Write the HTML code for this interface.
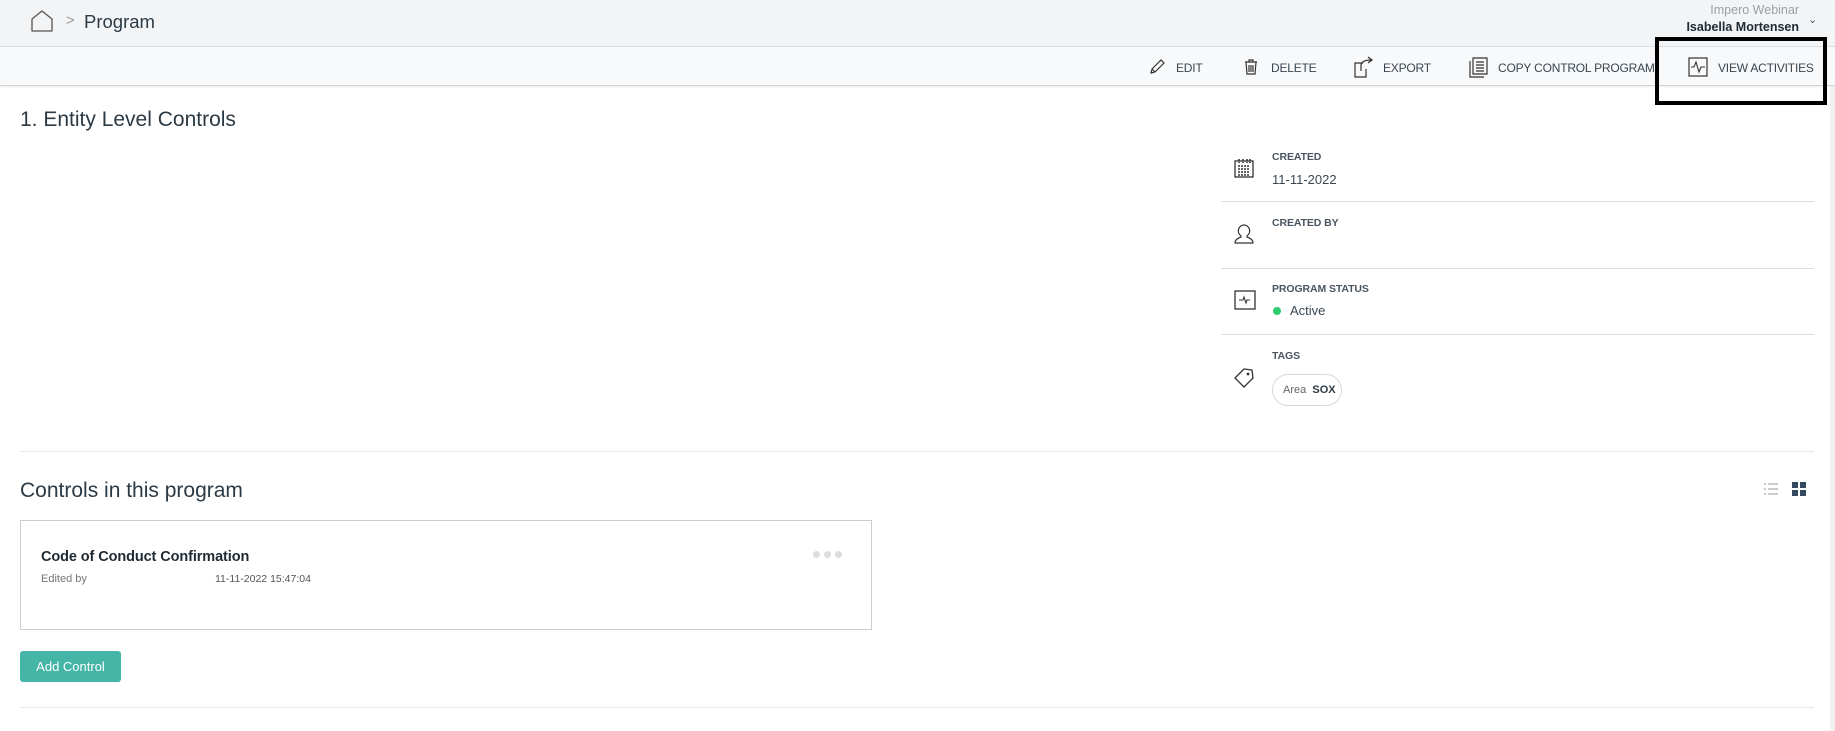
<!DOCTYPE html>
<html><head><meta charset="utf-8"><style>
*{margin:0;padding:0;box-sizing:border-box}
body{width:1835px;height:731px;background:#fff;font-family:"Liberation Sans",sans-serif;color:#2b3a45;position:relative;overflow:hidden}
.a{position:absolute;white-space:nowrap}
.top{position:absolute;left:0;top:0;width:1835px;height:47px;background:#f3f4f6;border-bottom:1px solid #dde0e3}
.tb{position:absolute;left:0;top:47px;width:1835px;height:39px;background:#f8f9fa;border-bottom:1px solid #cfd3d6;box-shadow:0 1px 2px rgba(0,0,0,.08)}
.ti{font-size:12px;color:#3a4650;top:61px;letter-spacing:-0.2px}
.lbl{font-size:10.5px;font-weight:bold;color:#4a5560;left:1272px;letter-spacing:-0.1px}
.val{font-size:13px;color:#3a4650;left:1272px}
.hl{position:absolute;left:1221px;width:593px;height:1px;background:#dcdfe2}
</style></head><body>
<div class="top"></div>
<svg class="a" style="left:30px;top:9px" width="24" height="24" viewBox="0 0 24 24"><path d="M2 10 L12 2 L22 10 V22 H2 Z" fill="none" stroke="#555" stroke-width="1.3" stroke-linejoin="round"/></svg>
<div class="a" style="left:66px;top:12px;font-size:15px;color:#999">&gt;</div>
<div class="a" style="left:84px;top:11px;font-size:18.5px;color:#2b3a45">Program</div>
<div class="a" style="right:36px;top:3px;font-size:12.5px;color:#9aa0a6">Impero Webinar</div>
<div class="a" style="right:36px;top:20px;font-size:12.5px;font-weight:bold;color:#1f2a33">Isabella Mortensen</div>
<div class="a" style="left:1808px;top:13px;font-size:11px;color:#555">&#8964;</div>
<div class="tb"></div>
<svg class="a" style="left:1148px;top:58px" width="18" height="18" viewBox="0 0 18 18"><path d="M3 15 L4 11 L13 2 L16 5 L7 14 Z M4 11 L7 14" fill="none" stroke="#333" stroke-width="1.2"/></svg>
<div class="a ti" style="left:1176px">EDIT</div>
<svg class="a" style="left:1242px;top:58px" width="18" height="18" viewBox="0 0 18 18"><path d="M3 4 H15 M7 4 V2 H11 V4 M4 4 L5 16 H13 L14 4 M7 7 V14 M9 7 V14 M11 7 V14" fill="none" stroke="#333" stroke-width="1.2"/></svg>
<div class="a ti" style="left:1271px">DELETE</div>
<svg class="a" style="left:1353px;top:56px" width="24" height="22" viewBox="0 0 24 22"><path d="M10 7 H2 V21 H13 V13 M8 15 V9 Q9 4 18 4 M15 1 L19 4 L15 7" fill="none" stroke="#333" stroke-width="1.2"/></svg>
<div class="a ti" style="left:1383px">EXPORT</div>
<svg class="a" style="left:1468px;top:56px" width="22" height="22" viewBox="0 0 22 22"><path d="M5 2 H19 V18 H5 Z M2 5 V21 H16 M8 6 H16 M8 9 H16 M8 12 H16 M8 15 H16" fill="none" stroke="#333" stroke-width="1.2"/></svg>
<div class="a ti" style="left:1498px">COPY CONTROL PROGRAM</div>
<svg class="a" style="left:1688px;top:57px" width="20" height="20" viewBox="0 0 20 20"><rect x="1" y="1" width="18" height="18" fill="none" stroke="#333" stroke-width="1.2"/><path d="M3 10 H6 L8 5 L11 15 L13 10 H17" fill="none" stroke="#333" stroke-width="1.1"/></svg>
<div class="a ti" style="left:1718px">VIEW ACTIVITIES</div>
<div class="a" style="left:1655px;top:37px;width:172px;height:68px;border:4px solid #000"></div>
<div class="a" style="left:20px;top:108px;font-size:21px;color:#2b3a45">1. Entity Level Controls</div>
<svg class="a" style="left:1234px;top:158px" width="20" height="20" viewBox="0 0 20 20"><rect x="1" y="3" width="18" height="16" fill="none" stroke="#333" stroke-width="1.3"/><path d="M5 1 V5 M9 1 V5 M13 1 V5 M16 1 V5 M4 8 H16 M4 11 H16 M4 14 H16 M4 17 H16" stroke="#333" stroke-width="1.6" stroke-dasharray="2 1"/></svg>
<div class="a lbl" style="top:151px">CREATED</div>
<div class="a val" style="top:172px">11-11-2022</div>
<div class="hl" style="top:201px"></div>
<svg class="a" style="left:1234px;top:224px" width="20" height="20" viewBox="0 0 20 20"><path d="M7 12 Q3 9 5 4 Q7 1 10 1 Q13 1 15 4 Q17 9 13 12 V13 Q19 15 19 19 H1 Q1 15 7 13 Z" fill="none" stroke="#333" stroke-width="1.2"/></svg>
<div class="a lbl" style="top:217px">CREATED BY</div>
<div class="hl" style="top:268px"></div>
<svg class="a" style="left:1234px;top:290px" width="22" height="20" viewBox="0 0 22 20"><rect x="1" y="1" width="20" height="18" fill="none" stroke="#333" stroke-width="1.3"/><path d="M5 10 H9 L10 7 L12 13 L13 10 H16" fill="none" stroke="#333" stroke-width="1.1"/></svg>
<div class="a lbl" style="top:283px">PROGRAM STATUS</div>
<div class="a" style="left:1273px;top:307px;width:8px;height:8px;border-radius:50%;background:#2ecc71"></div>
<div class="a val" style="left:1290px;top:303px">Active</div>
<div class="hl" style="top:334px"></div>
<svg class="a" style="left:1234px;top:368px" width="20" height="20" viewBox="0 0 20 20"><path d="M1 10 L10 1 L18 2 L19 10 L10 19 Z" fill="none" stroke="#333" stroke-width="1.3" stroke-linejoin="round"/><circle cx="14" cy="6" r="1.4" fill="#333"/></svg>
<div class="a lbl" style="top:350px">TAGS</div>
<div class="a" style="left:1272px;top:374px;width:70px;height:32px;border:1px solid #d5d8db;border-radius:16px;font-size:11px;line-height:30px;padding-left:10px;color:#666">Area&nbsp; <b style="color:#2b3a45">SOX</b></div>
<div class="a" style="left:20px;top:451px;width:1794px;height:1px;background:#e6e8ea"></div>
<div class="a" style="left:20px;top:479px;font-size:21px;color:#2b3a45">Controls in this program</div>
<svg class="a" style="left:1764px;top:482px" width="44" height="14" viewBox="0 0 44 14"><g fill="#ccc"><rect x="0" y="1" width="2" height="2"/><rect x="4" y="1" width="10" height="2"/><rect x="0" y="6" width="2" height="2"/><rect x="4" y="6" width="10" height="2"/><rect x="0" y="11" width="2" height="2"/><rect x="4" y="11" width="10" height="2"/></g><g fill="#34495e"><rect x="28" y="0" width="6" height="6"/><rect x="36" y="0" width="6" height="6"/><rect x="28" y="8" width="6" height="6"/><rect x="36" y="8" width="6" height="6"/></g></svg>
<div class="a" style="left:20px;top:520px;width:852px;height:110px;border:1px solid #ccc"></div>
<div class="a" style="left:41px;top:549px;font-size:14.5px;font-weight:bold;color:#1f2a33;letter-spacing:-0.1px">Code of Conduct Confirmation</div>
<div class="a" style="left:41px;top:573px;font-size:11px;color:#777">Edited by</div>
<div class="a" style="left:215px;top:573px;font-size:10.5px;color:#555">11-11-2022 15:47:04</div>
<div class="a" style="left:813px;top:551px;width:30px;height:6px;display:flex;gap:4px"><i style="width:7px;height:7px;border-radius:50%;background:#ddd"></i><i style="width:7px;height:7px;border-radius:50%;background:#ddd"></i><i style="width:7px;height:7px;border-radius:50%;background:#ddd"></i></div>
<div class="a" style="left:20px;top:651px;width:101px;height:31px;background:#45b5a8;border-radius:3px;color:#fff;font-size:13px;line-height:31px;text-align:center">Add Control</div>
<div class="a" style="left:20px;top:707px;width:1794px;height:1px;background:#e6e8ea"></div>
<div class="a" style="left:1830px;top:86px;width:5px;height:645px;background:#f1f1f1"></div>
</body></html>
